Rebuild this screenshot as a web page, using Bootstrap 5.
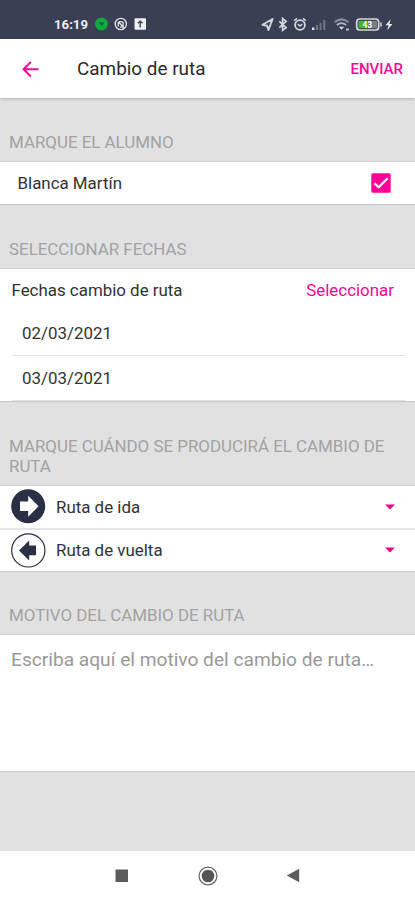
<!DOCTYPE html>
<html lang="es">
<head>
<meta charset="utf-8">
<meta name="viewport" content="width=device-width, initial-scale=1">
<title>Cambio de ruta</title>
<link href="https://cdn.jsdelivr.net/npm/bootstrap@5.3.0/dist/css/bootstrap.min.css" rel="stylesheet">
<style>
  :root { --pink: #f80793; --navy: #2b2f45; --canvas: #e1e1e1; }
  body { font-family: Roboto, "Liberation Sans", sans-serif; background: var(--canvas); color: #333; font-size: 16.9px; line-height: 20px; height: 900px; overflow: hidden; }
  svg { display: block; flex: none; }
  .status-strip { background: #3b3f53; height: 39px; padding: 10px 21px 0 54px; color: #eceef4; }
  .status-left { padding-top: 3px; }
  .clock { font-size: 13.2px; font-weight: 700; width: 41px; }
  .app-header { height: 59px; padding: 1px 12px 0 22px; box-shadow: 0 1px 3px rgba(0,0,0,.22); z-index: 1; }
  .app-title { font-size: 18.9px; margin-left: 38px; color: #2a2a2a; }
  .send-btn { font-size: 15px; font-weight: 500; color: var(--pink); line-height: 20px; }
  .pink-btn { color: var(--pink); font-size: 16.9px; line-height: 20px; }
  .section-label { color: #a2a2a2; font-size: 16.9px; line-height: 20px; padding: 0 9px 9px; border-bottom: 1px solid #d4d4d4; font-weight: 400; }
  .h-a { height: 64px; } .h-b { height: 65px; } .h-c { height: 85px; }
  .panel { background: #fff; box-shadow: 0 1px 1px rgba(0,0,0,.1); }
  .student { height: 42px; padding: 0 24px 0 17.5px; }
  .dates-head { height: 42px; padding: 0 21px 0 11.5px; }
  .date-row { height: 45px; margin: 0 10px 0 12px; padding-left: 10px; border-bottom: 1px solid #e3e3e3; }
  .route { height: 42px; padding: 0 18px 1px 11px; gap: 10px; }
  .route + .route { border-top: 2px solid #e6e6e6; height: 43px; }
  .reason { height: 136px; padding: 14px 11px; border: 0; resize: none; font-size: 19.15px; line-height: 22px; outline: 0; }
  .reason::placeholder { color: #999; opacity: 1; }
  .nav-strip { height: 49px; padding: 0 114px; }
</style>
<script src="https://cdn.jsdelivr.net/npm/bootstrap@5.3.0/dist/js/bootstrap.bundle.min.js"></script>
</head>
<body class="d-flex flex-column">
<div class="status-strip d-flex align-items-start justify-content-between">
  <div class="status-left d-flex align-items-center">
    <span class="clock lh-1 pt-1">16:19</span>
    <svg class="mt-1" width="52" height="16" viewBox="0 0 52 16">
      <circle cx="6.5" cy="7" r="6.4" fill="#12ab42"/><path d="M3.8 5.2h5.5L6.8 9.5z" fill="#0a6b35"/>
      <circle cx="25.8" cy="7" r="5.6" fill="none" stroke="#dfe1e9" stroke-width="1.4"/><path d="M23.3 9.4V5.6q2.4-2 4.8 0v3.8M23.5 5l5 5.2h-3.6" fill="none" stroke="#dfe1e9" stroke-width="1.3"/>
      <rect x="39.5" y="1.3" width="11.5" height="11.5" rx="1" fill="#eef0f4"/><path d="M45.2 10.5v-6M42.8 6.3l2.4-2.2 2.4 2.2" fill="none" stroke="#3b3f53" stroke-width="1.4"/>
    </svg>
  </div>
  <svg class="mt-1" width="133" height="20" viewBox="261 14 133 20" fill="none" stroke="#d5d7e0" stroke-width="1.5">
    <path d="M262.5 24.8L272.6 19l-4.2 11-1.3-4.2z" stroke-linejoin="round" stroke-width="1.9"/>
    <path d="M279.3 21.3l6.8 6.3-3.5 2.7V18.6l3.5 2.7-6.8 6.3" stroke-width="1.7"/>
    <circle cx="300" cy="25" r="4.9" stroke-width="1.8"/><path d="M294.2 20.6l2.8-2.2M305.8 20.6l-2.8-2.2M297.7 24l2.3 2 2.3-2"/>
    <g stroke="none"><rect x="312" y="27.5" width="2.4" height="2.5" fill="#e3e5ec"/><path d="M316 25h2v5h-2zM319.6 23h2v7h-2zM323.2 20h2.2v10h-2.2z" fill="#6f7385"/></g>
    <path d="M334.5 22.2q7-5.6 14 0" stroke="#858998" stroke-width="2"/><path d="M336.8 25q4.7-3.7 9.4 0" stroke="#b5b8c4" stroke-width="1.7"/><path d="M338.8 26.8h5.4l-2.7 3z" fill="#d5d7e0" stroke="none"/><path d="M346 29.5h3" stroke="#b5b8c4" stroke-width="2"/>
    <rect x="356.7" y="19" width="22" height="11" rx="3" stroke-width="1.7"/><rect x="358.5" y="20.8" width="9" height="7.4" fill="#45b52c" stroke="none"/><rect x="367.5" y="20.8" width="9.5" height="7.4" fill="#777d83" stroke="none"/><path d="M381 22.5v4"/>
    <text x="362.4" y="27.8" font-size="8.5" font-weight="700" fill="#fff" stroke="none">43</text>
    <path d="M390.6 19.2l-5 6h3.1l-1.5 5 5.2-6.2h-3z" fill="#eceef4" stroke="none"/>
  </svg>
</div>

<header class="app-header bg-white d-flex align-items-center position-relative">
  <svg width="17" height="17" viewBox="0 0 17 17" fill="none" stroke="#f80793" stroke-width="2"><path d="M16.5 8.2H1.5M8.9 .9L1.6 8.2l7.3 7.3"/></svg>
  <h1 class="app-title mb-0 fw-normal">Cambio de ruta</h1>
  <button class="send-btn btn p-0 border-0 ms-auto">ENVIAR</button>
</header>

<main class="flex-grow-1">
  <h2 class="section-label h-a d-flex align-items-end mb-0">MARQUE EL ALUMNO</h2>
  <label class="panel student d-flex align-items-center justify-content-between">
    <span>Blanca Martín</span>
    <svg width="20" height="20" viewBox="0 0 20 20"><rect x=".3" y=".3" width="19.4" height="19.4" rx="1.6" fill="#ff0099"/><path d="M3.4 10.2l4.3 4.1L16.6 5.2" fill="none" stroke="#fff" stroke-width="2.2"/></svg>
  </label>

  <h2 class="section-label h-b d-flex align-items-end mb-0">SELECCIONAR FECHAS</h2>
  <section class="panel">
    <div class="dates-head d-flex align-items-center justify-content-between">
      <span>Fechas cambio de ruta</span>
      <button class="pink-btn btn p-0 border-0">Seleccionar</button>
    </div>
    <div class="date-row d-flex align-items-center">02/03/2021</div>
    <div class="date-row d-flex align-items-center">03/03/2021</div>
  </section>

  <h2 class="section-label h-c d-flex align-items-end mb-0">MARQUE CUÁNDO SE PRODUCIRÁ EL CAMBIO DE RUTA</h2>
  <section class="panel">
    <div class="route d-flex align-items-center">
      <svg width="35" height="35" viewBox="0 0 35 35"><circle cx="17.2" cy="17.3" r="17" fill="#2b2f45"/><path d="M9 12.5h8.2V6.8L27.5 17.3 17.2 27.8v-5.7H9z" fill="#fff"/></svg>
      <span class="flex-grow-1">Ruta de ida</span>
      <svg width="14" height="8" viewBox="0 0 14 8"><path d="M2 1.4h10L7 6.6z" fill="#f1078c"/></svg>
    </div>
    <div class="route d-flex align-items-center">
      <svg width="35" height="35" viewBox="0 0 35 35"><circle cx="17.3" cy="17.4" r="16.6" fill="#fff" stroke="#2b2f45" stroke-width="1.2"/><path d="M25 12.6h-6.8V7.4L8 17.4l10.2 10v-5.2H25z" fill="#2b2f45"/></svg>
      <span class="flex-grow-1">Ruta de vuelta</span>
      <svg width="14" height="8" viewBox="0 0 14 8"><path d="M2 1.4h10L7 6.6z" fill="#f1078c"/></svg>
    </div>
  </section>

  <h2 class="section-label h-a d-flex align-items-end mb-0">MOTIVO DEL CAMBIO DE RUTA</h2>
  <textarea class="panel reason d-block w-100" placeholder="Escriba aquí el motivo del cambio de ruta…"></textarea>
</main>

<nav class="nav-strip bg-white d-flex align-items-center justify-content-between">
  <svg width="15" height="15" viewBox="0 0 15 15"><rect x="1.5" y="1.5" width="12.5" height="12.5" fill="#5c5c5c"/></svg>
  <svg width="20" height="20" viewBox="0 0 20 20"><circle cx="10" cy="10" r="8.9" fill="none" stroke="#666" stroke-width="1.2"/><circle cx="10" cy="10" r="6.3" fill="#555"/></svg>
  <svg width="15" height="15" viewBox="0 0 15 15"><path d="M13.2.7v13.6L.8 7.5z" fill="#5c5c5c"/></svg>
</nav>
</body>
</html>
